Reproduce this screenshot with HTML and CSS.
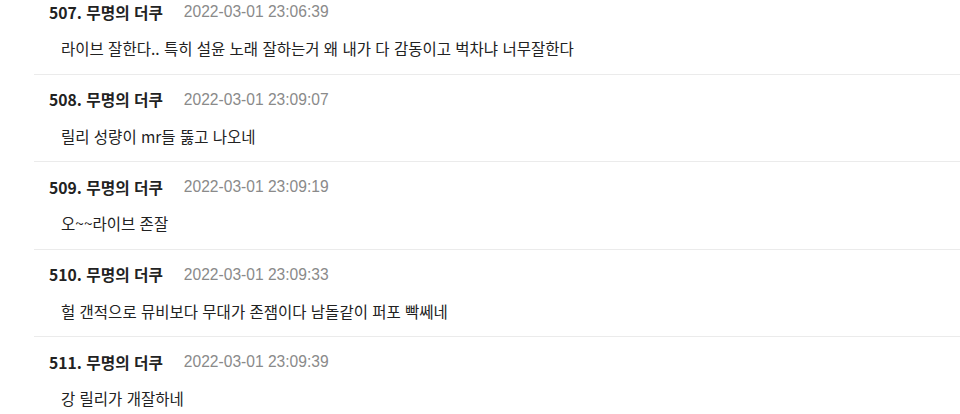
FILE: index.html
```html
<!DOCTYPE html>
<html lang="ko">
<head>
<meta charset="utf-8">
<link rel="stylesheet" href="styles.css">
</head>
<body>
<ul class="comments">
  <li class="comment">
    <div class="head"><span class="name">507. 무명의 더쿠</span><span class="date">2022-03-01 23:06:39</span></div>
    <div class="text">라이브 잘한다.. 특히 설윤 노래 잘하는거 왜 내가 다 감동이고 벅차냐 너무잘한다</div>
  </li>
  <li class="comment">
    <div class="head"><span class="name">508. 무명의 더쿠</span><span class="date">2022-03-01 23:09:07</span></div>
    <div class="text">릴리 성량이 mr들 뚫고 나오네</div>
  </li>
  <li class="comment">
    <div class="head"><span class="name">509. 무명의 더쿠</span><span class="date">2022-03-01 23:09:19</span></div>
    <div class="text">오~~라이브 존잘</div>
  </li>
  <li class="comment">
    <div class="head"><span class="name">510. 무명의 더쿠</span><span class="date">2022-03-01 23:09:33</span></div>
    <div class="text">헐 갠적으로 뮤비보다 무대가 존잼이다 남돌같이 퍼포 빡쎄네</div>
  </li>
  <li class="comment">
    <div class="head"><span class="name">511. 무명의 더쿠</span><span class="date">2022-03-01 23:09:39</span></div>
    <div class="text">강 릴리가 개잘하네</div>
  </li>
</ul>
</body>
</html>
```

FILE: styles.css
```css
html, body {
  margin: 0;
  padding: 0;
  background: #fff;
}
body {
  font-family: "Noto Sans CJK KR", "Noto Sans", sans-serif;
  color: #222;
  overflow: hidden;
  height: 414px;
}
.comments {
  list-style: none;
  margin: -13px 0 0 34px;
  padding: 0;
}
.comment {
  padding: 13px 0 13.5px 0;
  border-bottom: 1px solid #ebebeb;
}
.head {
  display: flex;
  align-items: center;
  gap: 21px;
  height: 24px;
  padding-left: 15px;
}
.name {
  font-size: 15.7px;
  font-weight: 700;
  color: #222;
}
.date {
  font-family: "Liberation Sans", "Noto Sans", sans-serif;
  font-size: 15.6px;
  color: #8a8a8a;
}
.text {
  margin-top: 12px;
  height: 24px;
  line-height: 24px;
  padding-left: 27px;
  font-size: 15.5px;
  color: #222;
}
```
